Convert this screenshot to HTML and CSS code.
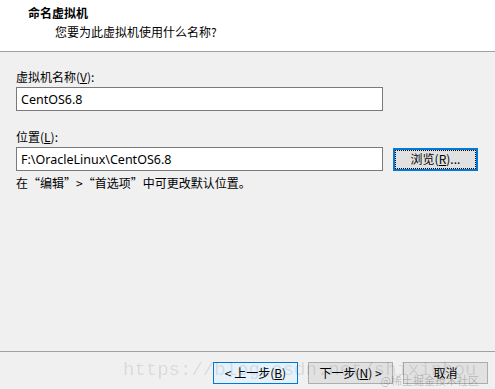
FILE: index.html
```html
<!DOCTYPE html>
<html lang="zh-CN">
<head>
    <meta charset="UTF-8">
    <title>新建虚拟机向导</title>
    <link rel="stylesheet" href="styles.css">
</head>
<body>
    <div class="wizard">
        <div class="wizard-header">
            <h1>命名虚拟机</h1>
            <p>您要为此虚拟机使用什么名称?</p>
        </div>

        <div class="wizard-body">
            <label class="field-label" for="vmName">虚拟机名称(<u>V</u>):</label>
            <div class="field-row">
                <input type="text" id="vmName" class="text-box" value="CentOS6.8">
            </div>

            <label class="field-label" for="vmPath">位置(<u>L</u>):</label>
            <div class="field-row">
                <input type="text" id="vmPath" class="text-box" value="F:\OracleLinux\CentOS6.8">
                <button class="btn btn-browse">浏览(<u>R</u>)...</button>
            </div>
            <p class="hint">在“编辑”&gt;“首选项”中可更改默认位置。</p>
        </div>

        <div class="wizard-footer">
            <button class="btn btn-focus">&lt; 上一步(<u>B</u>)</button>
            <button class="btn">下一步(<u>N</u>) &gt;</button>
            <button class="btn">取消</button>
        </div>

        <!-- watermark from the source picture -->
        <div class="watermark">https://blog.csdn.net/shixinhou</div>
        <div class="watermark-tag">@稀土掘金技术社区</div>
    </div>
</body>
</html>
```

FILE: styles.css
```css
/* General Styles */
body {
    margin: 0;
    background: #f0f0f0;
    font-family: "Noto Sans CJK SC", "Noto Sans", sans-serif;
    font-size: 12px;
    color: #000;
}

.wizard {
    position: relative;
    height: 389px;
    display: flex;
    flex-direction: column;
}

/* Header */
.wizard-header {
    background: #fff;
    height: 52px;
    border-bottom: 1px solid #a0a0a0;
    box-sizing: border-box;
    padding-top: 4px;
}

.wizard-header h1 {
    margin: 0 0 0 28px;
    font-size: 12px;
    font-weight: bold;
    line-height: 18px;
}

.wizard-header p {
    margin: 1px 0 0 55px;
    line-height: 17px;
}

/* Body */
.wizard-body {
    padding: 16px 16px 0 16px;
    flex: 1;
}

.field-label {
    display: block;
    line-height: 18px;
    margin-bottom: 1px;
}

.field-row {
    display: flex;
    align-items: center;
    gap: 10px;
    margin-bottom: 17px;
}

.field-row:last-of-type {
    margin-bottom: 0;
}

.text-box {
    width: 367px;
    height: 24px;
    box-sizing: border-box;
    border: 1px solid #7a7a7a;
    background: #fff;
    padding: 0 4px;
    font-family: "Noto Sans", sans-serif;
    font-size: 12.5px;
    color: #000;
    outline: none;
}

.hint {
    margin: 3px 0 0 0;
    line-height: 18px;
}

/* Buttons */
.btn {
    width: 85px;
    height: 22px;
    box-sizing: border-box;
    border: 1px solid #adadad;
    background: #e1e1e1;
    font-family: "Noto Sans CJK SC", sans-serif;
    font-size: 12px;
    color: #000;
    padding: 0;
    line-height: 18px;
}

.btn-focus {
    border-color: #0078d7;
    background: #e5f1fb;
}

.btn-browse {
    height: 23px;
    border: 2px solid #0078d7;
    outline: 1px dotted #000;
    outline-offset: -3px;
}

/* Footer */
.wizard-footer {
    border-top: 1px solid #a0a0a0;
    height: 38px;
    box-sizing: border-box;
    display: flex;
    justify-content: flex-end;
    gap: 10px;
    padding: 10px 7px 0 0;
}

/* Watermark */
.watermark {
    position: absolute;
    left: 123px;
    top: 359px;
    font-family: "Liberation Mono", monospace;
    font-size: 19px;
    color: rgba(0, 0, 0, 0.1);
    pointer-events: none;
}

.watermark-tag {
    position: absolute;
    right: 16px;
    top: 372px;
    font-size: 11px;
    color: rgba(0, 0, 0, 0.22);
    pointer-events: none;
}
```
